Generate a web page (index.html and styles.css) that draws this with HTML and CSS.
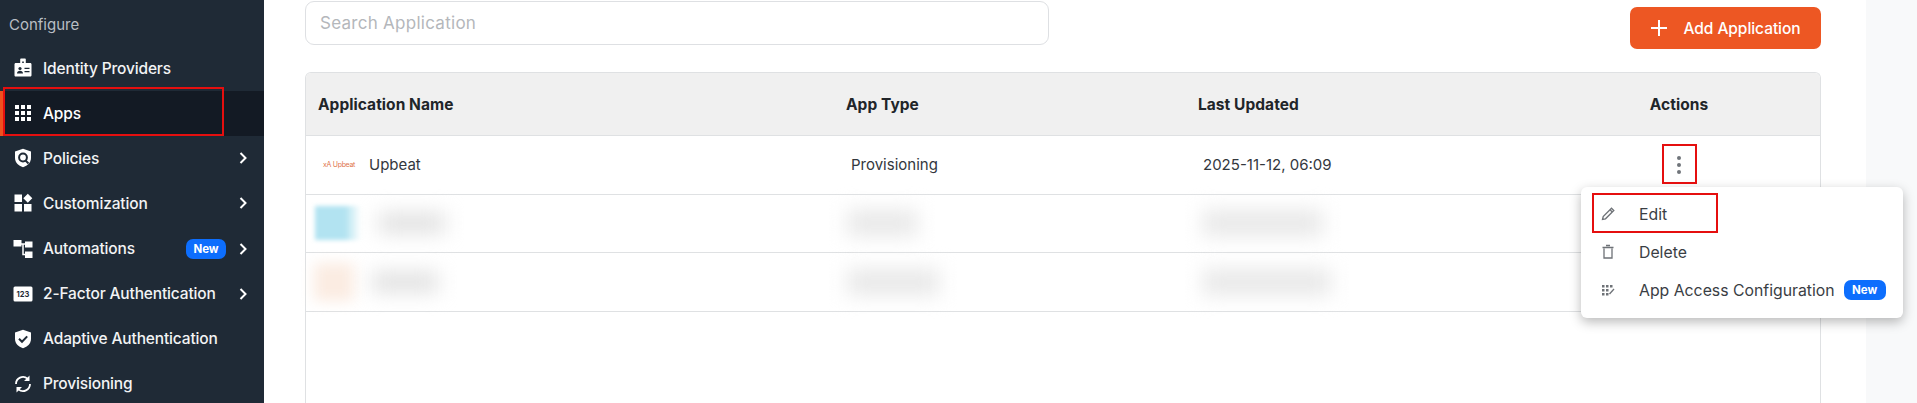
FILE: index.html
```html
<!DOCTYPE html>
<html lang="en">
<head>
<meta charset="utf-8">
<title>Apps</title>
<link rel="stylesheet" href="styles.css">
</head>
<body>
<div class="app">
  <aside class="sidebar">
    <div class="section-title">Configure</div>
    <nav class="nav">
      <a class="nav-item"><svg class="nav-icon" viewBox="0 0 20 20"><path fill="#fff" d="M8 .5h4a.8.8 0 0 1 .8.8V5h4.400c.8 0 1.300.6 1.300 1.300v11c0 .8-.6 1.300-1.300 1.300H2.800c-.8 0-1.300-.6-1.300-1.300v-11C1.500 5.600 2 5 2.800 5h4.400V1.300A.8.8 0 0 1 8 .5z"/><circle cx="7" cy="10.500" r="1.600" fill="#1f2a36"/><path fill="#1f2a36" d="M4 15.500c0-1.800 1.300-2.700 3-2.700s3 .9 3 2.700zM11.500 9.800h5v1.300h-5zM11.500 13h5v1.300h-5zM9.200 3.400h1.600v1.600H9.200z"/></svg><span class="nav-label">Identity Providers</span></a>
      <a class="nav-item active"><svg class="nav-icon" viewBox="0 0 20 20"><path fill="#fff" d="M2 2h4v4H2zM8 2h4v4H8zM14 2h4v4h-4zM2 8h4v4H2zM8 8h4v4H8zM14 8h4v4h-4zM2 14h4v4H2zM8 14h4v4H8zM14 14h4v4h-4z"/></svg><span class="nav-label">Apps</span></a>
      <a class="nav-item"><svg class="nav-icon" viewBox="0 0 20 20"><path fill="#fff" d="M10 .8l8 2.600v6.400c0 4.600-3.300 8-8 9.400-4.700-1.400-8-4.800-8-9.400V3.400z"/><circle cx="10" cy="9.500" r="3.900" fill="none" stroke="#1f2a36" stroke-width="2"/><path stroke="#1f2a36" stroke-width="2" d="M12.500 12.500l3 3"/></svg><span class="nav-label">Policies</span><svg class="chev" viewBox="0 0 10 14"><path d="M2.500 2l5 5-5 5"/></svg></a>
      <a class="nav-item"><svg class="nav-icon" viewBox="0 0 20 20"><path fill="#fff" d="M1.500 1.500h7.500V9H1.500zM14.800.8l4.500 4.500-4.500 4.500-4.500-4.500zM1.500 11h7.500v7.500H1.500zM11 11h7.500v7.500H11z"/></svg><span class="nav-label">Customization</span><svg class="chev" viewBox="0 0 10 14"><path d="M2.500 2l5 5-5 5"/></svg></a>
      <a class="nav-item"><svg class="nav-icon" viewBox="0 0 20 20"><path fill="#fff" d="M.5 1h8v6.500h-8zM12 2.500h7.500v6H12zM12 12.500h7.500V19H12z"/><path fill="none" stroke="#fff" stroke-width="1.500" d="M8 5h4M10 5v10.500h2"/></svg><span class="nav-label">Automations</span><span class="badge">New</span><svg class="chev" viewBox="0 0 10 14"><path d="M2.500 2l5 5-5 5"/></svg></a>
      <a class="nav-item"><svg class="nav-icon" viewBox="0 0 20 20"><rect x=".5" y="2.500" width="19" height="15" rx="1.500" fill="#fff"/><text x="10" y="12.800" class="icon-num">123</text></svg><span class="nav-label">2-Factor Authentication</span><svg class="chev" viewBox="0 0 10 14"><path d="M2.500 2l5 5-5 5"/></svg></a>
      <a class="nav-item"><svg class="nav-icon" viewBox="0 0 20 20"><path fill="#fff" d="M10 .8l8 2.600v6.400c0 4.600-3.300 8-8 9.400-4.700-1.400-8-4.800-8-9.400V3.400z"/><path fill="none" stroke="#1f2a36" stroke-width="2" d="M6 9.800l3 3 5.200-5.400"/></svg><span class="nav-label">Adaptive Authentication</span></a>
      <a class="nav-item"><svg class="nav-icon" viewBox="0 0 20 20"><path fill="none" stroke="#fff" stroke-width="1.800" d="M3 10a7 7 0 0 1 11.500-5.400M17 10a7 7 0 0 1-11.500 5.400"/><path fill="#fff" d="M16.500 1.500v5.500h-5.500zM3.500 18.500V13h5.500z"/></svg><span class="nav-label">Provisioning</span></a>
    </nav>
  </aside>
  <main class="main">
    <div class="content">
      <div class="toolbar">
        <input class="search" type="text" placeholder="Search Application">
        <button class="add-btn"><svg class="plus" viewBox="0 0 18 18"><path d="M9 1v16M1 9h16"/></svg><span>Add Application</span></button>
      </div>
      <div class="table">
        <div class="row head">
          <div class="cell">Application Name</div>
          <div class="cell">App Type</div>
          <div class="cell">Last Updated</div>
          <div class="cell center">Actions</div>
        </div>
        <div class="row body-row first">
          <div class="cell name"><span class="logo"><i class="logo-mark">xA</i> Upbeat</span><span>Upbeat</span></div>
          <div class="cell shift">Provisioning</div>
          <div class="cell shift">2025-11-12, 06:09</div>
          <div class="cell center"><svg class="dots" viewBox="0 0 6 20"><circle cx="3" cy="3" r="2"/><circle cx="3" cy="10" r="2"/><circle cx="3" cy="17" r="2"/></svg></div>
        </div>
        <div class="row body-row">
          <div class="cell name"><span class="smear smear-blue"></span><span class="smear smear-text"></span></div>
          <div class="cell shift"><span class="smear smear-type"></span></div>
          <div class="cell shift"><span class="smear smear-date"></span></div>
          <div class="cell"></div>
        </div>
        <div class="row body-row">
          <div class="cell name"><span class="smear smear-peach"></span><span class="smear smear-text"></span></div>
          <div class="cell shift"><span class="smear smear-type wide"></span></div>
          <div class="cell shift"><span class="smear smear-date wide"></span></div>
          <div class="cell"></div>
        </div>
      </div>
    </div>
    <aside class="gutter"></aside>
  </main>
  <div class="menu">
    <div class="menu-item"><svg class="menu-icon" viewBox="0 0 16 16"><path d="M2.500 13.500l.7-3L11.500 2.200l2.300 2.300-8.300 8.300zM10 3.700l2.300 2.300"/></svg><span>Edit</span></div>
    <div class="menu-item"><svg class="menu-icon" viewBox="0 0 16 16"><path d="M4 4.500v9.500h8V4.500M2.500 3.500h11M6 1.500h4"/></svg><span>Delete</span></div>
    <div class="menu-item"><svg class="menu-icon" viewBox="0 0 16 16"><path class="menu-dots" d="M2 3h2.500v2.500H2zM6 3h2.500v2.500H6zM10 3h2.500v2.500H10zM2 7h2.500v2.500H2zM6 7h2.500v2.500H6zM2 11h2.500v2.500H2zM6 11h2.500v2.500H6z"/><path d="M9.500 12l4.500-5"/></svg><span>App Access Configuration</span><span class="badge">New</span></div>
  </div>
  <div class="mark mark-apps"></div>
  <div class="mark mark-dots"></div>
  <div class="mark mark-edit"></div>
</div>
</body>
</html>
```
FILE: styles.css
```css
* { box-sizing: border-box; }
html, body { margin: 0; height: 403px; overflow: hidden; }
body { font-family: "Inter", "Noto Sans", sans-serif; background: #fff; color: #2b2f36; }
.app { position: relative; display: flex; width: 1917px; height: 403px; overflow: hidden; }

.sidebar { width: 264px; flex: none; background: #1f2a36; color: #fff; padding-top: 15px; }
.section-title { font-size: 15px; line-height: 20px; color: #b9bec4; padding-left: 9px; margin-bottom: 10.600px; }
.nav { display: flex; flex-direction: column; }
.nav-item { height: 45.100px; flex: none; display: flex; align-items: center; padding: 0 16px 0 13px; font-size: 15.500px; font-weight: 500; color: #f2f3f4; }
.nav-item.active { background: #131a24; border-left: 3px solid #f0501e; padding-left: 10px; color: #fff; }
.nav-icon { width: 20px; height: 20px; flex: none; margin-right: 10px; }
.nav-label { flex: 1; white-space: nowrap; letter-spacing: -0.15px; }
.icon-num { font-family: "Inter", sans-serif; font-size: 7.500px; font-weight: 700; fill: #1f2a36; text-anchor: middle; }
.chev { width: 10px; height: 14px; flex: none; margin-left: 12px; }
.chev path { fill: none; stroke: #fff; stroke-width: 2; }
.badge { flex: none; width: 40px; height: 20px; border-radius: 7px; background: #0d6efd; color: #fff; font-size: 11.500px; font-weight: 700; line-height: 20px; text-align: center; }

.main { flex: 1; display: flex; min-width: 0; }
.content { width: 1602px; flex: none; padding: 1px 45px 0 41px; }
.gutter { flex: 1; background: #f8f9fa; }
.toolbar { display: flex; align-items: flex-start; justify-content: space-between; height: 71px; }
.search { width: 744px; height: 44px; border: 1px solid #dee0e3; border-radius: 9px; padding: 0 14px; font: 17px "Inter", sans-serif; letter-spacing: 0.27px; color: #2b2f36; outline: none; background: #fff; }
.search::placeholder { color: #b4b7bb; opacity: 1; }
.add-btn { width: 191px; height: 42px; margin-top: 6px; border: 0; border-radius: 7px; background: #ed5723; color: #fff; font: 500 15.500px "Inter", sans-serif; display: flex; align-items: center; justify-content: center; gap: 15px; padding: 0; letter-spacing: -0.05px; }
.plus { width: 18px; height: 18px; }
.plus path { stroke: #fff; stroke-width: 2; fill: none; }

.table { border: 1px solid #dfe1e3; border-bottom: 0; border-radius: 6px 6px 0 0; height: 332px; }
.row { display: grid; grid-template-columns: 528px 352px 352px 1fr; align-items: center; font-size: 15px; }
.head { height: 63px; background: #f0f0f0; font-size: 15.500px; font-weight: 700; color: #212529; border-bottom: 1px solid #dfe1e3; border-radius: 5px 5px 0 0; letter-spacing: 0.05px; }
.head .cell { padding-left: 12px; }
.head .cell.center { padding-left: 0; }
.body-row { height: 58.500px; border-bottom: 1px solid #dfe1e3; color: #33373d; }
.cell { display: flex; align-items: center; min-width: 0; height: 100%; }
.center { justify-content: center; }
.shift { padding-left: 12px; }
.first .shift { padding-left: 17px; }
.name { padding-left: 8px; position: relative; }
.logo { width: 55px; font-size: 7px; color: #e0754a; padding-left: 9px; white-space: nowrap; flex: none; letter-spacing: -0.3px; }
.logo-mark { font-style: normal; }
.dots { width: 6px; height: 20px; fill: #70747a; }

.smear { display: block; flex: none; }
.smear-blue { width: 46px; height: 34px; margin-left: 1px; background: linear-gradient(90deg, #b2e3f1 0 65%, #d8f1f7 82%, transparent); filter: blur(2px); }
.smear-peach { width: 40px; height: 38px; background: #fbece2; filter: blur(7px); }
.smear-text { width: 66px; height: 20px; background: #e0e0e0; margin-left: 18px; filter: blur(10px); }
.smear-type { width: 70px; height: 26px; margin-left: 1px; background: #e8e8e8; filter: blur(10px); }
.smear-type.wide { width: 92px; }
.smear-date { width: 120px; height: 26px; margin-left: 5px; background: #e8e8e8; filter: blur(10px); }
.smear-date.wide { width: 128px; }

.menu { position: absolute; left: 1581px; top: 187px; width: 322px; height: 131px; padding: 8px 0; background: #fff; border-radius: 6px; box-shadow: 0 4px 12px rgba(0, 0, 0, 0.28); font-size: 15.800px; color: #3a3e44; }
.menu-item { display: flex; align-items: center; height: 38px; padding-left: 19px; }
.menu-icon { width: 16px; height: 16px; flex: none; margin-right: 23px; fill: none; stroke: #6e7277; stroke-width: 1.300; }
.menu-dots { fill: #6e7277; stroke: none; }
.menu-item .badge { margin-left: 9px; width: 42px; }

.mark { position: absolute; border: 2px solid #e50f0f; }
.mark-apps { left: 3px; top: 87px; width: 221px; height: 49px; }
.mark-dots { left: 1662px; top: 144px; width: 35px; height: 40px; }
.mark-edit { left: 1592px; top: 193px; width: 126px; height: 40px; }
```
